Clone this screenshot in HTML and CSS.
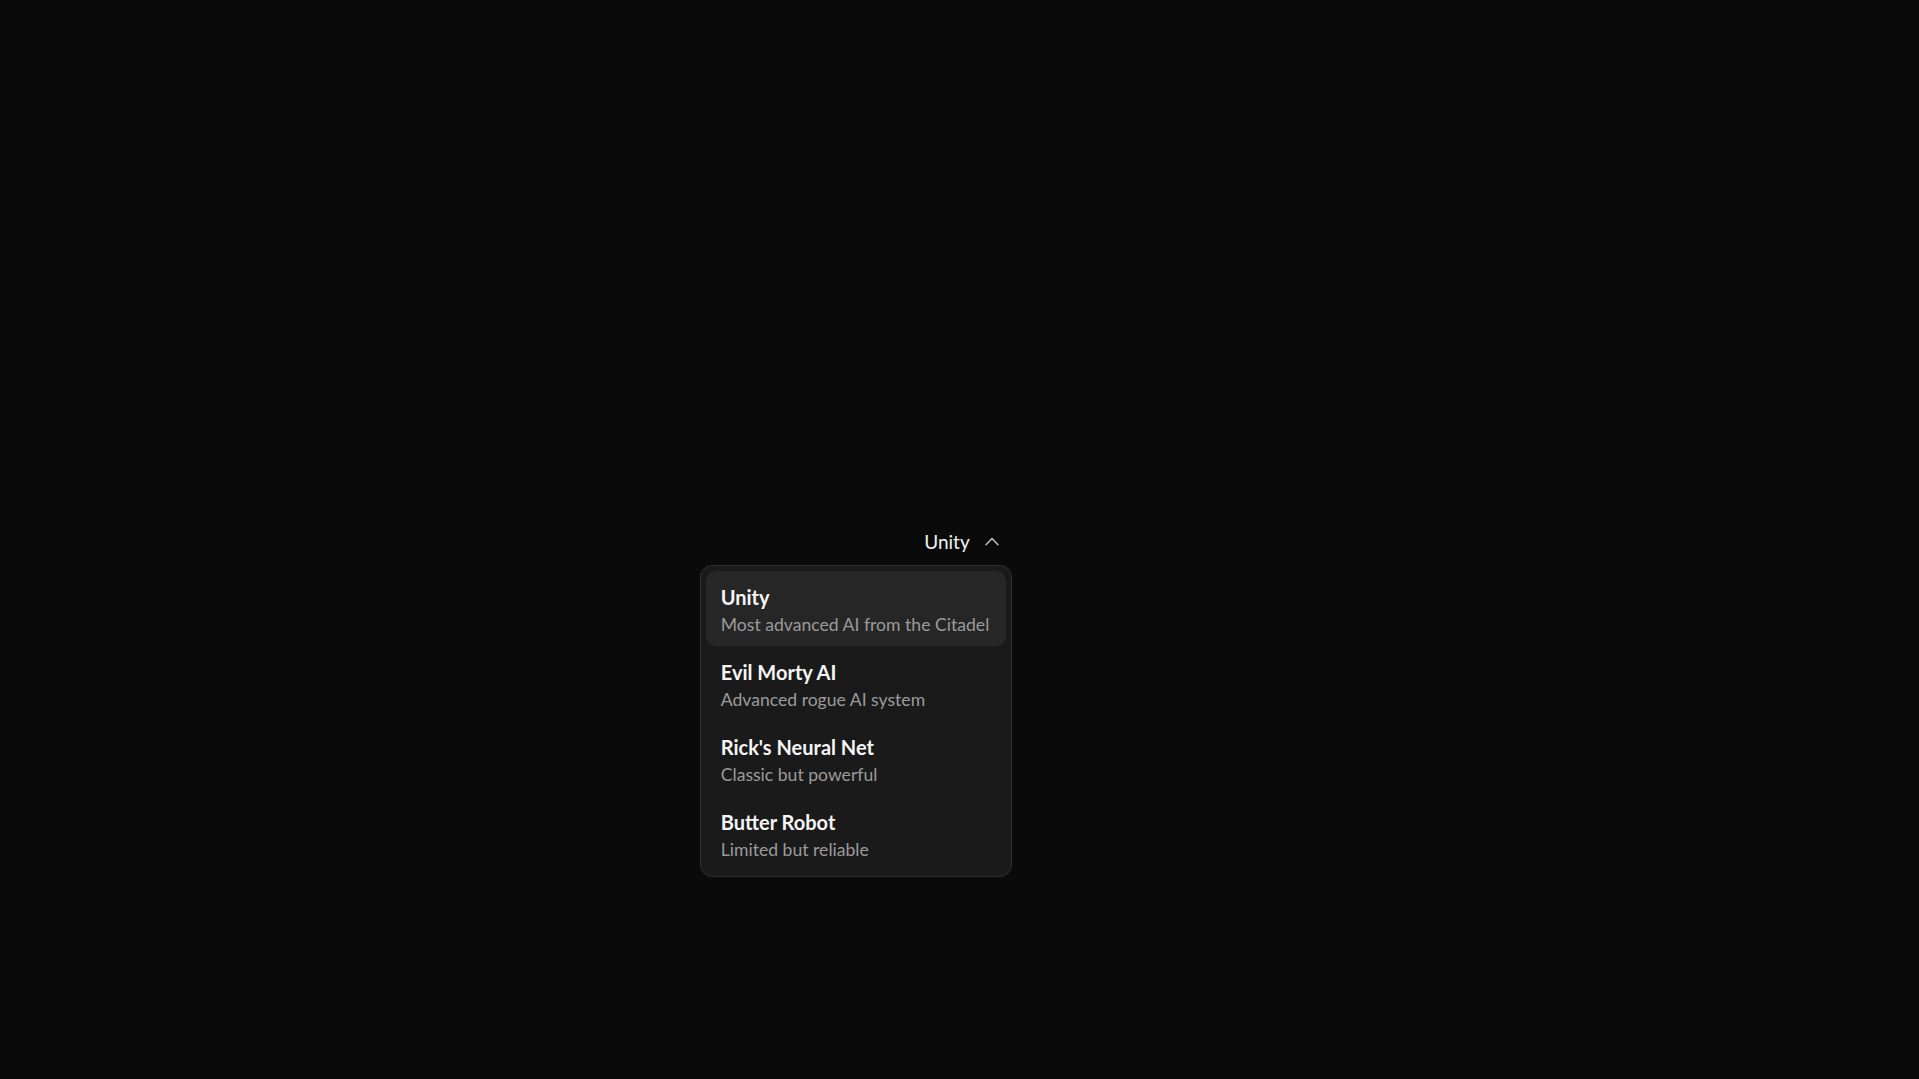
FILE: index.html
```html
<!DOCTYPE html>
<html lang="en">
<head>
<meta charset="utf-8">
<title>Model selector</title>
<link rel="stylesheet" href="styles.css">
</head>
<body>
<main class="stage">
  <div class="select">
    <button class="trigger" type="button">
      <span class="trigger-label">Unity</span>
      <svg class="chevron" width="14" height="9" viewBox="0 0 14 9" fill="none" stroke="currentColor" stroke-width="1.4" stroke-linecap="round" stroke-linejoin="round"><path d="M1 7.8 7 1.6l6 6.2"/></svg>
    </button>
    <ul class="menu">
      <li class="option active">
        <span class="option-title">Unity</span>
        <span class="option-desc">Most advanced AI from the Citadel</span>
      </li>
      <li class="option">
        <span class="option-title">Evil Morty AI</span>
        <span class="option-desc">Advanced rogue AI system</span>
      </li>
      <li class="option">
        <span class="option-title">Rick's Neural Net</span>
        <span class="option-desc">Classic but powerful</span>
      </li>
      <li class="option">
        <span class="option-title">Butter Robot</span>
        <span class="option-desc">Limited but reliable</span>
      </li>
    </ul>
  </div>
</main>
</body>
</html>
```
FILE: styles.css
```css
html, body {
  margin: 0;
  height: 100%;
  background: #0a0a0a;
}
body {
  font-family: "Lato", "Noto Sans", sans-serif;
  color: #f2f2f2;
}
.stage {
  height: 100%;
  display: flex;
  align-items: center;
  justify-content: center;
}
.select {
  position: relative;
}
.trigger {
  display: flex;
  align-items: center;
  gap: 15px;
  height: 36px;
  padding: 0 13px 0 17px;
  background: transparent;
  border: 0;
  color: #f2f2f2;
  font-family: inherit;
  font-size: 19px;
  cursor: pointer;
}
.trigger-label {
  line-height: 1;
  padding-top: 3px;
}
.chevron {
  color: #c4c4c4;
  display: block;
  margin-top: 4px;
}
.menu {
  position: absolute;
  right: 0;
  top: calc(100% + 7px);
  width: 300px;
  margin: 0;
  padding: 5px;
  list-style: none;
  background: #1a1a1a;
  border: 1px solid #2f2f2f;
  border-radius: 12px;
}
.option {
  display: flex;
  flex-direction: column;
  justify-content: center;
  height: 75px;
  box-sizing: border-box;
  padding: 4px 15px 0;
  border-radius: 9px;
  white-space: nowrap;
}
.option.active {
  background: #262626;
}
.option-title {
  font-size: 20px;
  font-weight: 700;
  color: #f5f5f5;
  line-height: 26px;
}
.option-desc {
  font-size: 17.6px;
  color: #9a9a9a;
  line-height: 25px;
  margin-top: 2px;
}
```
